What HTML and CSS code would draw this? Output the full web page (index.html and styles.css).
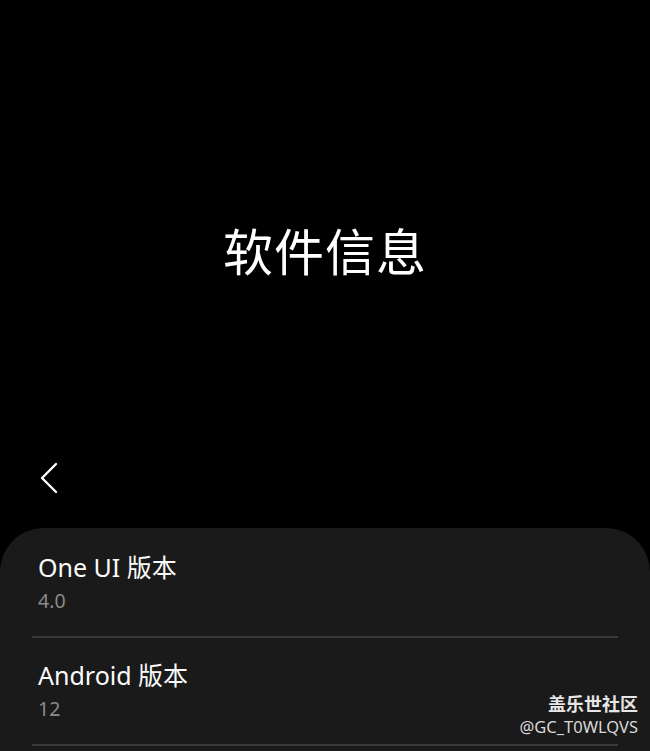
FILE: index.html
```html
<!DOCTYPE html>
<html lang="zh">
<head>
<meta charset="utf-8">
<link rel="stylesheet" href="styles.css">
</head>
<body>
<div class="screen">
  <header class="hero">
    <h1 class="title">软件信息</h1>
  </header>
  <div class="toolbar">
    <svg class="back" width="20" height="32" viewBox="0 0 20 32"><path d="M17 2 L3 16 L17 30" fill="none" stroke="#fff" stroke-width="2.4" stroke-linecap="round" stroke-linejoin="round"/></svg>
  </div>
  <section class="card">
    <div class="item">
      <div class="item-title">One UI 版本</div>
      <div class="item-sub">4.0</div>
    </div>
    <div class="divider"></div>
    <div class="item">
      <div class="item-title">Android 版本</div>
      <div class="item-sub">12</div>
    </div>
    <div class="divider"></div>
  </section>
  <div class="watermark">
    <div class="wm-name">盖乐世社区</div>
    <div class="wm-id">@GC_T0WLQVS</div>
  </div>
</div>
</body>
</html>
```
FILE: styles.css
```css
html, body {
  margin: 0;
  padding: 0;
  background: #000;
}
body {
  width: 650px;
  height: 751px;
  overflow: hidden;
  font-family: "Noto Sans", "Noto Sans CJK SC", sans-serif;
  color: #fff;
}
.screen {
  position: relative;
  width: 650px;
  height: 751px;
  display: flex;
  flex-direction: column;
  overflow: hidden;
}
.hero {
  flex: 0 0 450px;
  display: flex;
  justify-content: center;
  padding-top: 212px;
  box-sizing: border-box;
}
.title {
  margin: 0;
  font-family: "Noto Sans CJK SC", sans-serif;
  font-weight: 400;
  font-size: 50px;
  line-height: 74px;
  letter-spacing: 1px;
  color: #fff;
}
.toolbar {
  flex: 0 0 78px;
  display: flex;
  align-items: flex-start;
  padding: 12px 0 0 39px;
  box-sizing: border-box;
}
.card {
  flex: 0 0 auto;
  background: #1a1a1a;
  border-radius: 44px 44px 0 0;
  padding: 22px 32px 0 32px;
}
.item {
  padding: 0 6px;
  height: 86px;
}
.item-title {
  font-size: 25px;
  line-height: 34px;
  color: #fafafa;
}
.item-sub {
  padding-top: 3px;
  font-size: 19.5px;
  line-height: 28px;
  color: #8a8a8a;
}
.divider {
  height: 2px;
  background: #3a3a3a;
  margin-bottom: 20px;
}
.watermark {
  position: absolute;
  right: 12px;
  top: 690px;
  text-align: right;
}
.wm-name {
  font-family: "Noto Sans CJK SC", sans-serif;
  font-weight: 700;
  font-size: 18px;
  line-height: 26px;
  color: #e6e6e6;
}
.wm-id {
  font-size: 16.5px;
  line-height: 22px;
  color: #d8d8d8;
}
```
